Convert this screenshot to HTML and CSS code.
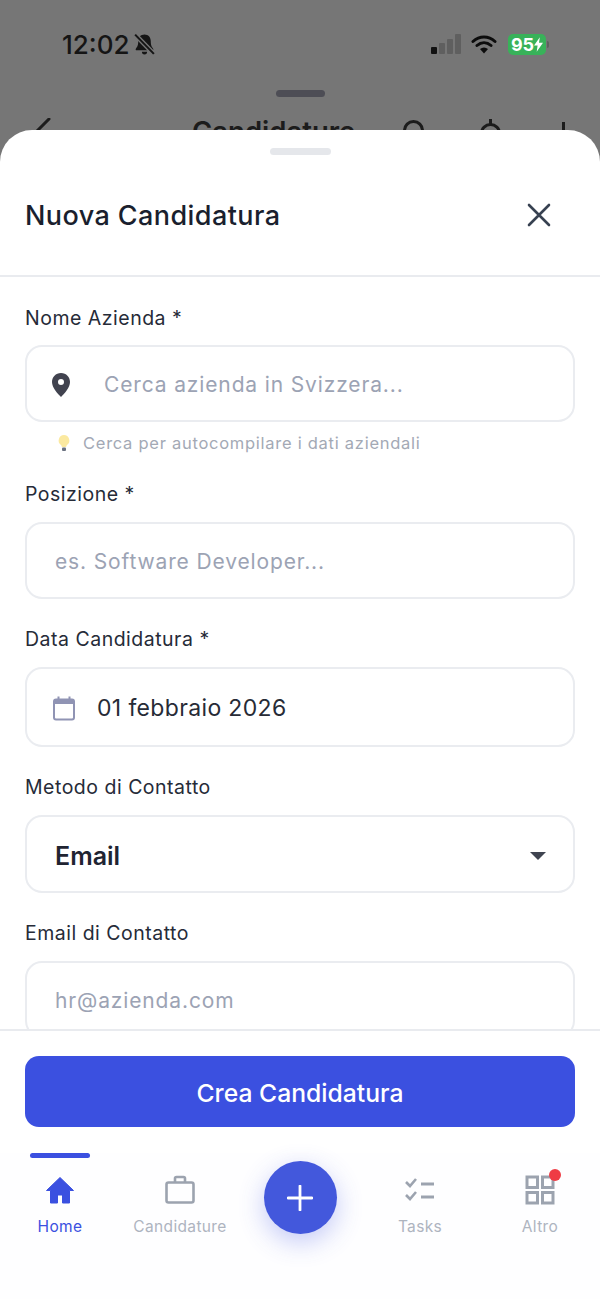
FILE: index.html
```html
<!DOCTYPE html>
<html lang="en">
<head>
  <meta charset="UTF-8" />
  <title>Nuova Candidatura</title>
  <link rel="stylesheet" href="styles.css">
</head>
<body>

  <div id="backdrop">
    <div id="statusbar">
      <div class="status-left">
        <span class="clock">12:02</span>
        <svg class="bell" viewBox="0 0 24 24" width="25" height="25">
          <path d="M12 2.500c-3.600 0-6 2.700-6 6.200 0 4.200-1 5.800-2.300 7.300-.5.6-.1 1.500.7 1.500h15.200c.8 0 1.200-.9.7-1.500-1.300-1.500-2.300-3.100-2.300-7.300 0-3.500-2.400-6.200-6-6.200z" fill="#151515"/>
          <path d="M9.500 19h5a2.500 2.500 0 0 1-5 0z" fill="#151515"/>
          <path d="M3 2.500 21 21" stroke="#767676" stroke-width="4.500"/>
          <path d="M3 2.500 21 21" stroke="#151515" stroke-width="2"/>
        </svg>
      </div>
      <div class="status-right">
        <svg viewBox="0 0 30 20" width="30" height="20">
          <rect x="0" y="13" width="6" height="7" rx="1" fill="#111"/>
          <rect x="8" y="9" width="6" height="11" rx="1" fill="#5f5f5f"/>
          <rect x="16" y="5" width="6" height="15" rx="1" fill="#5f5f5f"/>
          <rect x="24" y="0" width="6" height="20" rx="1" fill="#5f5f5f"/>
        </svg>
        <svg class="wifi" viewBox="0 0 26 20" width="26" height="20">
          <path d="M2 7.500c6.500-6 15.500-6 22 0M6 11.500c4.200-3.800 9.800-3.800 14 0" fill="none" stroke="#0c0c0c" stroke-width="3" stroke-linecap="round"/>
          <path d="M9 15c2.500-2 5.500-2 8 0l-4 4.500z" fill="#0c0c0c"/>
        </svg>
        <div class="battery">95<svg viewBox="0 0 10 16" width="9" height="15"><path d="M6.500 0 0 9h4l-1 7 7-10H5.500z" fill="#fff"/></svg></div>
        <span class="battery-tip"></span>
      </div>
    </div>
    <div class="back-handle"></div>
    <div class="back-header">
      <svg class="back-arrow" viewBox="0 0 24 24" width="24" height="24"><path d="M18 1 6 13" fill="none" stroke="#1c1c1c" stroke-width="3" stroke-linecap="round"/></svg>
      <span class="back-title">Candidature</span>
      <span class="back-search"></span>
      <span class="back-bell"></span>
      <span class="back-plus"></span>
    </div>
  </div>

  <div id="sheet">
    <div class="sheet-handle"></div>
    <div class="sheet-head">
      <h1>Nuova Candidatura</h1>
      <svg viewBox="0 0 24 24" width="24" height="24"><path d="M2 2 22 22M22 2 2 22" fill="none" stroke="#374151" stroke-width="2.600" stroke-linecap="round"/></svg>
    </div>

    <div class="form">
      <label>Nome Azienda *</label>
      <div class="field field-company">
        <svg viewBox="0 0 20 26" width="20" height="26"><path fill-rule="evenodd" d="M10 1C4.700 1 1 5 1 10c0 5.500 5.500 11.500 9 15 3.500-3.500 9-9.500 9-15 0-5-3.700-9-9-9zm0 6a3 3 0 1 1 0 6 3 3 0 0 1 0-6z" fill="#41434f"/></svg>
        <span class="placeholder">Cerca azienda in Svizzera...</span>
      </div>
      <div class="hint">
        <svg viewBox="0 0 14 18" width="14" height="18"><path d="M7 1a5.500 5.500 0 0 0-3 10c.6.500.8 1.200.8 2h4.400c0-.8.2-1.500.8-2A5.500 5.500 0 0 0 7 1z" fill="#fbe9a0"/><rect x="5" y="13.500" width="4" height="3.500" rx="1" fill="#6b7280"/></svg>
        <span>Cerca per autocompilare i dati aziendali</span>
      </div>

      <label>Posizione *</label>
      <div class="field field-plain"><span class="placeholder">es. Software Developer...</span></div>

      <label>Data Candidatura *</label>
      <div class="field field-date">
        <svg viewBox="0 0 24 26" width="24" height="26"><path d="M2 6.500a2 2 0 0 1 2-2h16a2 2 0 0 1 2 2V9H2z" fill="#9094b4"/><rect x="2" y="4.500" width="20" height="20" rx="2" fill="none" stroke="#9094b4" stroke-width="2"/><path d="M6.500 1.500v4M17.500 1.500v4" stroke="#9094b4" stroke-width="2"/></svg>
        <span class="value">01 febbraio 2026</span>
      </div>

      <label>Metodo di Contatto</label>
      <div class="field field-select">
        <span class="value-strong">Email</span>
        <span class="caret"></span>
      </div>

      <label>Email di Contatto</label>
      <div class="field field-plain"><span class="placeholder">hr@azienda.com</span></div>
    </div>

    <div class="actions">
      <button class="primary">Crea Candidatura</button>
    </div>

    <nav id="tabbar">
      <div class="tab active">
        <span class="tab-mark"></span>
        <svg viewBox="0 0 30 30" width="30" height="30"><path d="M15 2.500 1.500 15.500H5.500V28h7v-8h5v8h7V15.500h4z" fill="#3b50e0" stroke="#3b50e0" stroke-linejoin="round"/></svg>
        <span>Home</span>
      </div>
      <div class="tab">
        <svg viewBox="0 0 30 30" width="30" height="30"><rect x="1.500" y="7.500" width="27" height="20" rx="2" fill="none" stroke="#9ca3af" stroke-width="2.600"/><path d="M10 7.500V3.500a1.500 1.500 0 0 1 1.500-1.500h7a1.500 1.500 0 0 1 1.500 1.500v4" fill="none" stroke="#9ca3af" stroke-width="2.600"/></svg>
        <span>Candidature</span>
      </div>
      <div class="tab tab-fab">
        <button class="fab"><svg viewBox="0 0 26 26" width="26" height="26"><path d="M13 1v24M1 13h24" stroke="#fff" stroke-width="2.800" stroke-linecap="round"/></svg></button>
      </div>
      <div class="tab">
        <svg viewBox="0 0 30 30" width="30" height="30"><path d="M1 7l4 4 6-7M1 20l4 4 6-7" fill="none" stroke="#9ca3af" stroke-width="2.600"/><path d="M16 9h13M16 22h13" stroke="#9ca3af" stroke-width="3"/></svg>
        <span>Tasks</span>
      </div>
      <div class="tab">
        <span class="tab-dot"></span>
        <svg viewBox="0 0 30 30" width="30" height="30"><g fill="none" stroke="#9ca3af" stroke-width="3"><rect x="2" y="2" width="10.500" height="10.500"/><rect x="17.500" y="2" width="10.500" height="10.500"/><rect x="2" y="17.500" width="10.500" height="10.500"/><rect x="17.500" y="17.500" width="10.500" height="10.500"/></g></svg>
        <span>Altro</span>
      </div>
    </nav>
  </div>

</body>
</html>
```

FILE: styles.css
```css
* {
  box-sizing: border-box;
}

body {
  margin: 0;
  width: 600px;
  height: 1299px;
  overflow: hidden;
  background-color: #767676;
  font-family: Inter, "Liberation Sans", sans-serif;
  color: #1a1f2e;
  display: flex;
  flex-direction: column;
}

/* dimmed page behind the sheet */
#backdrop {
  height: 130px;
  flex-shrink: 0;
  overflow: hidden;
  position: relative;
}

#statusbar {
  height: 86px;
  padding: 27px 51px 0 62px;
  display: flex;
  justify-content: space-between;
  align-items: flex-start;
}

.status-left {
  display: flex;
  align-items: center;
  gap: 2px;
  height: 34px;
}

.clock {
  font-size: 26px;
  font-weight: 500;
  color: #151515;
}

.status-right {
  display: flex;
  align-items: center;
  gap: 11px;
  height: 34px;
}

.wifi {
  margin-left: -1px;
}

.battery {
  width: 38px;
  height: 21px;
  margin-right: -10px;
  background-color: #38b259;
  border-radius: 5px;
  color: #fff;
  font-size: 18px;
  font-weight: 700;
  display: flex;
  align-items: center;
  justify-content: center;
}

.battery-tip {
  width: 2px;
  height: 7px;
  background-color: #5f5f5f;
  border-radius: 0 2px 2px 0;
}

.back-handle {
  width: 49px;
  height: 7px;
  margin: 4px auto 0;
  background-color: #4d4d55;
  border-radius: 4px;
}

.back-header {
  position: relative;
  height: 33px;
}

.back-arrow {
  position: absolute;
  left: 31px;
  top: 21px;
}

.back-title {
  position: absolute;
  left: 192px;
  top: 19px;
  font-size: 27.500px;
  font-weight: 600;
  line-height: 30px;
  color: #1c1c1c;
}

.back-search,
.back-bell {
  position: absolute;
  top: 23px;
  width: 21px;
  height: 21px;
  border: 3px solid #1c1c1c;
  border-radius: 50%;
}

.back-search {
  left: 403px;
}

.back-bell {
  left: 480px;
  top: 26px;
}

.back-bell::before {
  content: "";
  position: absolute;
  left: 6px;
  top: -7px;
  width: 3px;
  height: 5px;
  background-color: #1c1c1c;
}

.back-plus {
  position: absolute;
  left: 562px;
  top: 25px;
  width: 3px;
  height: 20px;
  background-color: #1c1c1c;
}

/* sheet */
#sheet {
  flex: 1;
  min-height: 0;
  background-color: #fff;
  border-radius: 32px 32px 0 0;
  display: flex;
  flex-direction: column;
  overflow: hidden;
}

.sheet-handle {
  width: 61px;
  height: 7px;
  margin: 18px auto 0;
  background-color: #e5e7eb;
  border-radius: 4px;
}

.sheet-head {
  height: 122px;
  flex-shrink: 0;
  padding: 0 49px 0 25px;
  display: flex;
  justify-content: space-between;
  align-items: center;
  border-bottom: 2px solid #e9ebef;
}

.sheet-head h1 {
  margin: 0;
  font-size: 27px;
  font-weight: 500;
  letter-spacing: 0.42px;
  color: #1a1f2e;
}

.form {
  flex: 1;
  min-height: 0;
  overflow: hidden;
  padding: 27px 25px 0;
  display: flex;
  flex-direction: column;
}

.form label {
  height: 26px;
  font-size: 19.500px;
  line-height: 28px;
  letter-spacing: 0.5px;
  color: #262b38;
  flex-shrink: 0;
}

.field {
  flex-shrink: 0;
  margin-top: 16px;
  margin-bottom: 26px;
  padding-top: 2px;
  border: 2px solid #eaecf0;
  border-radius: 17px;
  display: flex;
  align-items: center;
  background-color: #fff;
}

.field-company {
  height: 77px;
  margin-top: 15px;
  margin-bottom: 0;
  padding-left: 24px;
  gap: 33px;
}

.field-plain {
  height: 77px;
  padding-left: 28px;
}

.field-date {
  height: 80px;
  padding-left: 25px;
  gap: 21px;
}

.field-select {
  height: 78px;
  padding: 3px 27px 0 28px;
  justify-content: space-between;
}

.placeholder {
  font-size: 21px;
  letter-spacing: 0.86px;
  color: #9ca3b4;
}

.value {
  font-size: 23px;
  letter-spacing: 0.35px;
  color: #272b36;
}

.value-strong {
  font-size: 25px;
  font-weight: 600;
  color: #1f2432;
}

.caret {
  width: 0;
  height: 0;
  border-left: 8px solid transparent;
  border-right: 8px solid transparent;
  border-top: 8px solid #3f4450;
}

.hint {
  flex-shrink: 0;
  height: 22px;
  margin: 10px 0 26px;
  padding-left: 32px;
  display: flex;
  align-items: center;
  gap: 12px;
  font-size: 16.500px;
  letter-spacing: 0.73px;
  color: #a3a9b5;
}

.actions {
  height: 124px;
  flex-shrink: 0;
  padding: 25px 25px 0;
  border-top: 2px solid #e9ebef;
}

.primary {
  width: 100%;
  height: 71px;
  padding: 3px 0 0;
  border: none;
  border-radius: 14px;
  background-color: #3b50e0;
  color: #fff;
  font-family: inherit;
  font-size: 24.700px;
  font-weight: 500;
}

/* bottom tabs */
#tabbar {
  height: 146px;
  flex-shrink: 0;
  display: flex;
  background-color: #fefeff;
  position: relative;
}

.tab {
  width: 120px;
  padding-top: 22px;
  position: relative;
  display: flex;
  flex-direction: column;
  align-items: center;
  gap: 12px;
  font-size: 15.500px;
  letter-spacing: 0.35px;
  color: #aeb4bf;
}

.tab.active {
  color: #3b50e0;
}

.tab-mark {
  position: absolute;
  top: 0;
  left: 30px;
  width: 60px;
  height: 5px;
  background-color: #3b50e0;
  border-radius: 3px;
}

.tab-dot {
  position: absolute;
  top: 16px;
  left: 69px;
  width: 12px;
  height: 12px;
  background-color: #ef3b44;
  border-radius: 50%;
}

.tab-fab {
  padding-top: 8px;
}

.fab {
  width: 73px;
  height: 73px;
  padding: 0;
  border: none;
  border-radius: 50%;
  background-color: #4358dc;
  box-shadow: 0 8px 26px rgba(59, 80, 224, 0.3);
  display: flex;
  align-items: center;
  justify-content: center;
}
```
